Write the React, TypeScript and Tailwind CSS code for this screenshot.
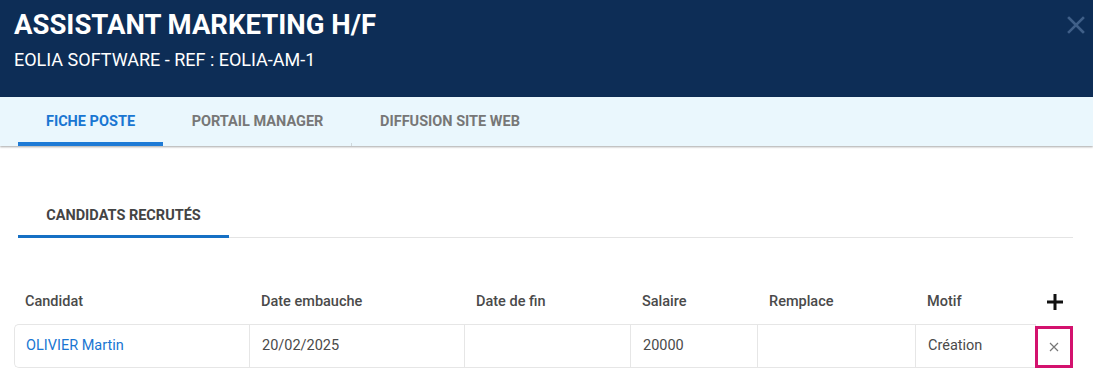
import React from "react";

const cols = "grid-cols-[235px_215px_166px_127px_158px_121px_37px]";

export default function App() {
  return (
    <div className="w-[1093px] h-[387px] bg-white overflow-hidden" style={{ fontFamily: "Roboto, 'Liberation Sans', sans-serif" }}>
      {/* Header */}
      <div className="relative h-[97px] bg-[#0d2d56] pl-[14px] pt-[9px]">
        <div className="text-white text-[27.5px] font-bold leading-[32px]">ASSISTANT MARKETING H/F</div>
        <div className="text-white text-[18px] leading-[22px] mt-[8px]">EOLIA SOFTWARE - REF : EOLIA-AM-1</div>
        <svg className="absolute right-[8px] top-[16px]" width="18" height="18" viewBox="0 0 18 18">
          <path d="M2 2 L16 16 M16 2 L2 16" stroke="#3f5f88" strokeWidth="2.6" strokeLinecap="square" />
        </svg>
      </div>
      {/* Tabs */}
      <div className="relative h-[49px] bg-[#eaf7fd] pl-[18px] flex shadow-[0_1px_2px_rgba(0,0,0,0.35)] z-10">
        <div className="relative w-[145px] flex items-center justify-center text-[14.5px] font-bold text-[#1976d2] pt-[1px]">
          FICHE POSTE
          <div className="absolute left-0 right-0 bottom-0 h-[4px] bg-[#1e7bd6]" />
        </div>
        <div className="relative w-[189px] flex items-center justify-center text-[14.5px] font-bold text-[#777777] pt-[1px]">
          PORTAIL MANAGER
          <div className="absolute right-0 bottom-0 h-[3px] w-px bg-[#cfd8dc]" />
        </div>
        <div className="w-[196px] flex items-center justify-center text-[14.5px] font-bold text-[#777777] pt-[1px]">
          DIFFUSION SITE WEB
        </div>
      </div>
      {/* Sub tabs */}
      <div className="mt-[46px] ml-[18px] mr-[20px] border-b border-[#e4e4e4] flex">
        <div className="relative w-[211px] h-[45px] flex items-center justify-center text-[14.5px] font-bold text-[#444444] pt-[3px]">
          CANDIDATS RECRUTÉS
          <div className="absolute left-0 right-0 bottom-[-1px] h-[3px] bg-[#1670c4]" />
        </div>
      </div>
      {/* Table */}
      <div className="mt-[50px] ml-[14px]">
        <div className={`grid ${cols} h-[28px] mb-[8px] items-center text-[14.5px] font-medium text-[#4a4a4a]`}>
          <div className="pl-[11px]">Candidat</div>
          <div className="pl-[12px]">Date embauche</div>
          <div className="pl-[12px]">Date de fin</div>
          <div className="pl-[12px]">Salaire</div>
          <div className="pl-[12px]">Remplace</div>
          <div className="pl-[12px]">Motif</div>
          <div className="flex justify-center">
            <svg width="18" height="18" viewBox="0 0 18 18">
              <path d="M9 1 V17 M1 9 H17" stroke="#111" strokeWidth="3" />
            </svg>
          </div>
        </div>
        <div className={`grid ${cols} h-[42px] items-stretch text-[14.5px] text-[#4a4a4a]`}>
          <div className="pl-[11px] flex items-center border border-r-0 border-[#e6e6e6] rounded-l-[5px] text-[#1976d2]">OLIVIER Martin</div>
          <div className="pl-[12px] flex items-center border border-r-0 border-[#e6e6e6]">20/02/2025</div>
          <div className="pl-[12px] flex items-center border border-r-0 border-[#e6e6e6]"></div>
          <div className="pl-[12px] flex items-center border border-r-0 border-[#e6e6e6]">20000</div>
          <div className="pl-[12px] flex items-center border border-r-0 border-[#e6e6e6]"></div>
          <div className="pl-[12px] flex items-center border border-[#e6e6e6]">Création</div>
          <div className="flex items-center justify-center border-[3px] border-[#d3126e] mt-[2px] h-[42px] -ml-px">
            <svg width="10" height="10" viewBox="0 0 10 10">
              <path d="M1 1 L9 9 M9 1 L1 9" stroke="#777" strokeWidth="1.2" />
            </svg>
          </div>
        </div>
      </div>
    </div>
  );
}
